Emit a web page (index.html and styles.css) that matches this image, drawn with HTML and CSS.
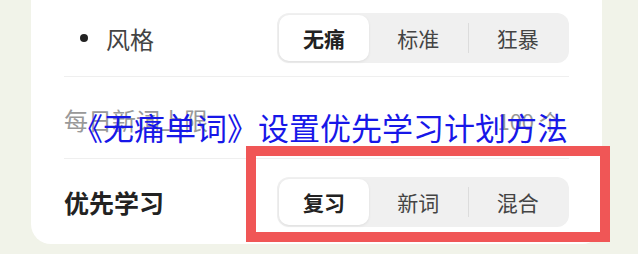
FILE: index.html
```html
<!DOCTYPE html>
<html lang="zh-CN">
<head>
    <meta charset="UTF-8">
    <meta name="viewport" content="width=device-width, initial-scale=1.0">
    <title>无痛单词 设置</title>
    <link rel="stylesheet" href="styles.css">
</head>

<body>
    <div class="card">
        <div class="row">
            <div class="label bullet">风格</div>
            <div class="segmented">
                <span class="seg active">无痛</span>
                <span class="seg">标准</span>
                <span class="divider"></span>
                <span class="seg">狂暴</span>
            </div>
        </div>
        <div class="row middle">
            <div class="label muted">每日新词上限</div>
            <div class="value">100 个</div>
        </div>
        <div class="row last">
            <div class="label strong">优先学习</div>
            <div class="segmented">
                <span class="seg active">复习</span>
                <span class="seg">新词</span>
                <span class="divider"></span>
                <span class="seg">混合</span>
            </div>
        </div>
    </div>

    <!-- 标注层 -->
    <div class="caption">《无痛单词》设置优先学习计划方法</div>
    <div class="highlight"></div>
</body>

</html>
```

FILE: styles.css
```css
body {
    margin: 0;
    width: 638px;
    height: 254px;
    overflow: hidden;
    position: relative;
    background-color: #f1f3e9;
    font-family: "Noto Sans CJK SC", "Noto Sans", sans-serif;
}

.card {
    margin-left: 31px;
    width: 571px;
    height: 244px;
    padding: 0 33px;
    box-sizing: border-box;
    background: #fff;
    border-radius: 0 0 20px 20px;
}

.row {
    display: flex;
    align-items: center;
    justify-content: space-between;
    height: 76px;
    border-bottom: 1px solid #efefef;
}

.row.middle {
    height: 81px;
}

.row.last {
    height: 86px;
    border-bottom: none;
}

.label {
    font-size: 24px;
    color: #444;
}

.label.bullet {
    display: flex;
    align-items: center;
    padding-left: 16px;
}

.label.bullet::before {
    content: "";
    width: 8px;
    height: 8px;
    border-radius: 50%;
    background: #222;
    margin-right: 18px;
}

.label.muted {
    color: #999;
    margin-top: 4px;
}

.label.strong {
    font-size: 25px;
    font-weight: 600;
    color: #222;
}

.value {
    font-size: 22px;
    color: #999;
    margin-right: 8px;
    margin-top: 4px;
}

.segmented {
    display: flex;
    align-items: center;
    width: 292px;
    height: 50px;
    padding: 2px;
    box-sizing: border-box;
    background: #f0f0f0;
    border-radius: 12px;
}

.seg {
    flex: 1;
    height: 100%;
    display: flex;
    align-items: center;
    justify-content: center;
    font-size: 21px;
    color: #444;
}

.seg.active {
    flex: 0 0 90px;
    background: #fff;
    border-radius: 10px;
    font-weight: 700;
    color: #222;
    box-shadow: 0 1px 3px rgba(0,0,0,0.08);
}

.divider {
    width: 1px;
    height: 30px;
    background: #dcdcdc;
}

.caption {
    position: absolute;
    left: 72px;
    top: 108px;
    font-size: 31px;
    line-height: 1.2;
    color: #1717e8;
    white-space: nowrap;
}

.highlight {
    position: absolute;
    left: 246px;
    top: 146px;
    width: 364px;
    height: 96px;
    border: 10px solid #f05656;
    box-sizing: border-box;
}
```
